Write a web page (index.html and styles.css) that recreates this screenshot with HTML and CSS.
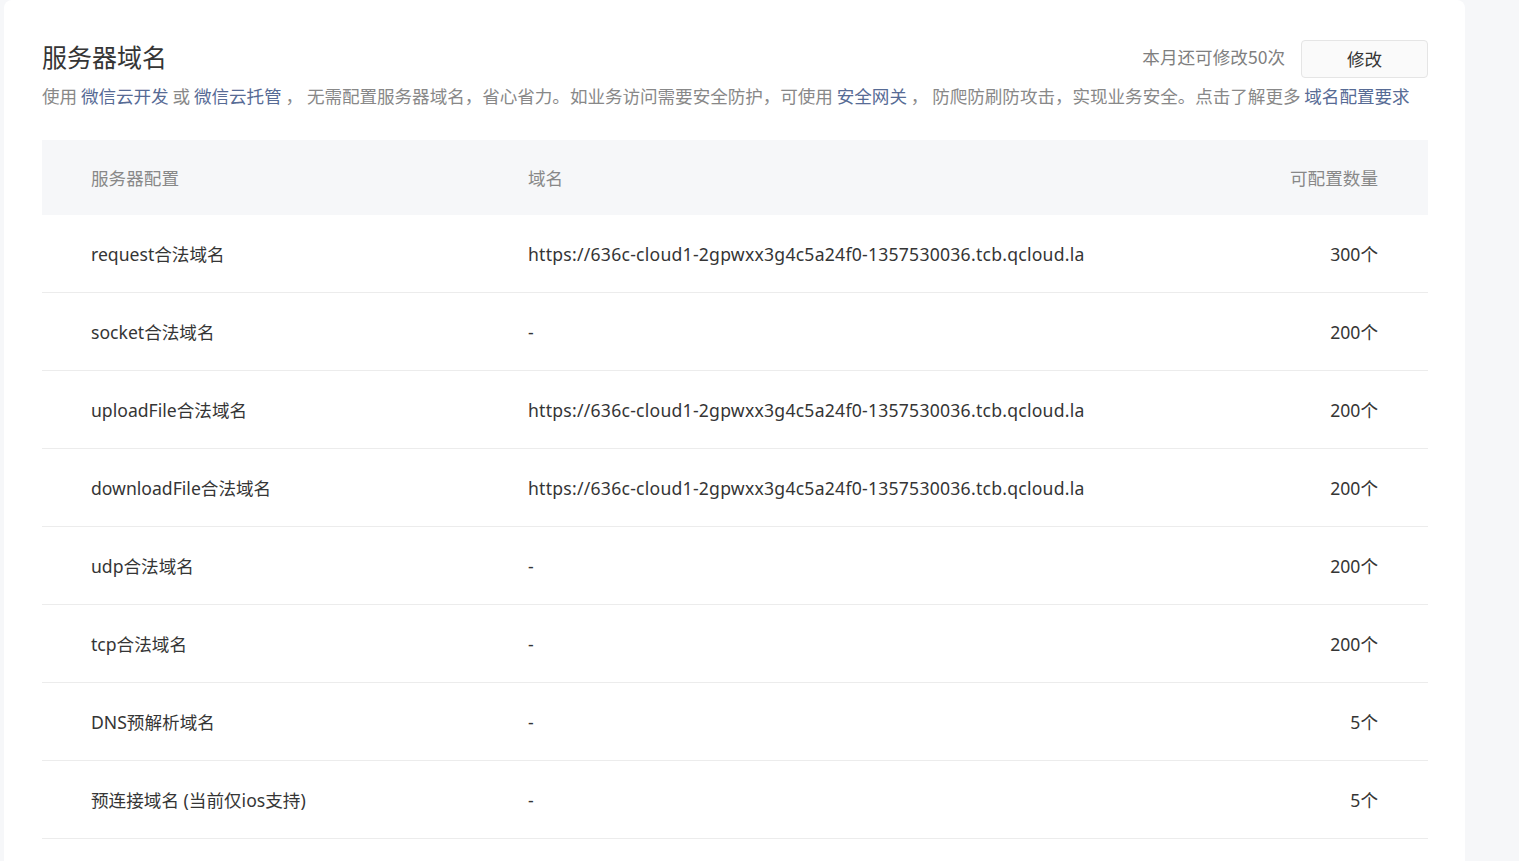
FILE: index.html
```html
<!DOCTYPE html>
<html lang="zh-CN">
<head>
  <meta charset="UTF-8">
  <meta name="viewport" content="width=device-width, initial-scale=1.0">
  <title>服务器域名</title>
  <link rel="stylesheet" href="styles.css">
</head>
<body>
  <div class="panel">
    <div class="panel-head">
      <h2 class="panel-title">服务器域名</h2>
      <div class="panel-actions">
        <span class="quota">本月还可修改50次</span>
        <button class="btn">修改</button>
      </div>
    </div>
    <p class="panel-desc">使用 <a href="#">微信云开发</a> 或 <a href="#">微信云托管</a> ， 无需配置服务器域名，省心省力。如业务访问需要安全防护，可使用 <a href="#">安全网关</a> ， 防爬防刷防攻击，实现业务安全。点击了解更多 <a href="#">域名配置要求</a></p>

    <table class="domain-table">
      <thead>
        <tr>
          <th class="col-name">服务器配置</th>
          <th class="col-domain">域名</th>
          <th class="col-count">可配置数量</th>
        </tr>
      </thead>
      <tbody>
        <tr>
          <td class="col-name">request合法域名</td>
          <td class="col-domain">https://636c-cloud1-2gpwxx3g4c5a24f0-1357530036.tcb.qcloud.la</td>
          <td class="col-count">300个</td>
        </tr>
        <tr>
          <td class="col-name">socket合法域名</td>
          <td class="col-domain">-</td>
          <td class="col-count">200个</td>
        </tr>
        <tr>
          <td class="col-name">uploadFile合法域名</td>
          <td class="col-domain">https://636c-cloud1-2gpwxx3g4c5a24f0-1357530036.tcb.qcloud.la</td>
          <td class="col-count">200个</td>
        </tr>
        <tr>
          <td class="col-name">downloadFile合法域名</td>
          <td class="col-domain">https://636c-cloud1-2gpwxx3g4c5a24f0-1357530036.tcb.qcloud.la</td>
          <td class="col-count">200个</td>
        </tr>
        <tr>
          <td class="col-name">udp合法域名</td>
          <td class="col-domain">-</td>
          <td class="col-count">200个</td>
        </tr>
        <tr>
          <td class="col-name">tcp合法域名</td>
          <td class="col-domain">-</td>
          <td class="col-count">200个</td>
        </tr>
        <tr>
          <td class="col-name">DNS预解析域名</td>
          <td class="col-domain">-</td>
          <td class="col-count">5个</td>
        </tr>
        <tr>
          <td class="col-name">预连接域名 (当前仅ios支持)</td>
          <td class="col-domain">-</td>
          <td class="col-count">5个</td>
        </tr>
      </tbody>
    </table>
  </div>
</body>
</html>
```

FILE: styles.css
```css
body {
  margin: 0;
  background-color: #f6f7f9;
  font-family: "Noto Sans", "Noto Sans CJK SC", sans-serif;
  color: #353535;
}
.panel {
  background-color: #ffffff;
  margin-left: 4px;
  width: 1461px;
  min-height: 861px;
  box-sizing: border-box;
  padding: 40px 37px 0 38px;
  border-radius: 8px 8px 0 0;
}
.panel-head {
  display: flex;
  align-items: center;
  justify-content: space-between;
  height: 38px;
}
.panel-title {
  align-self: flex-start;
  margin: 0;
  font-family: "Noto Sans CJK SC", sans-serif;
  font-size: 25px;
  font-weight: 400;
  line-height: 32px;
  color: #353535;
}
.panel-actions {
  display: flex;
  align-items: center;
}
.quota {
  font-family: "Noto Sans CJK SC", sans-serif;
  font-size: 17.6px;
  color: #7f7f7f;
  margin-right: 16px;
  padding-bottom: 5px;
}
.btn {
  width: 127px;
  height: 38px;
  padding: 0 0 2px;
  background-color: #fafafa;
  border: 1px solid #e5e5e5;
  border-radius: 4px;
  font-family: "Noto Sans CJK SC", sans-serif;
  font-size: 17.6px;
  color: #353535;
  cursor: pointer;
}
.panel-desc {
  margin: 5px 0 0;
  font-family: "Noto Sans CJK SC", sans-serif;
  font-size: 17.6px;
  line-height: 26px;
  letter-spacing: -0.06px;
  color: #888888;
  white-space: nowrap;
}
.panel-desc a {
  color: #576b95;
  text-decoration: none;
}
.domain-table {
  margin-top: 31px;
  width: 1386px;
  border-collapse: collapse;
  font-size: 17.6px;
}
.domain-table th {
  background-color: #f6f7f9;
  height: 75px;
  padding: 0;
  font-family: "Noto Sans CJK SC", sans-serif;
  font-weight: 400;
  color: #888888;
  text-align: left;
}
.domain-table td {
  height: 77px;
  padding: 0;
  border-bottom: 1px solid #ececec;
  color: #353535;
}
.col-name {
  width: 437px;
  padding-left: 49px !important;
}
.domain-table td.col-domain {
  letter-spacing: 0.24px;
}
.domain-table .col-count {
  text-align: right;
  padding-right: 50px;
}
```
